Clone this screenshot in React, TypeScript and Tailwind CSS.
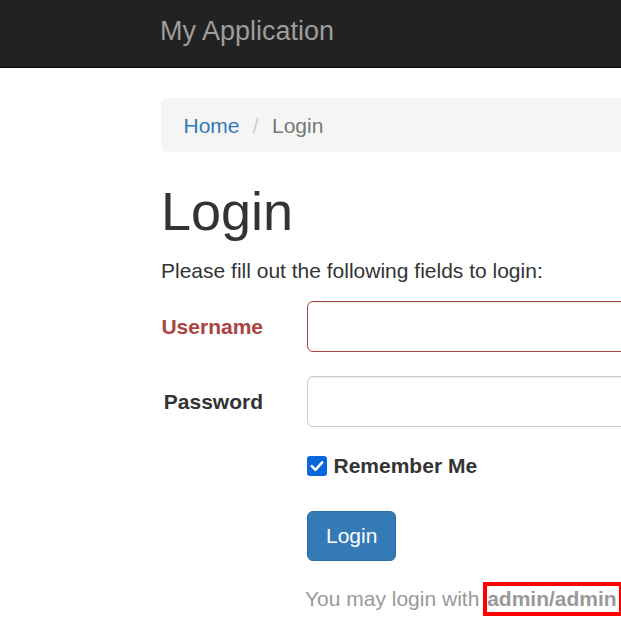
import React from "react";

export default function App() {
  return (
    <div
      className="w-[621px] h-[619px] overflow-hidden bg-white text-[#333]"
      style={{ fontFamily: '"Liberation Sans", Arial, sans-serif' }}
    >
      <nav className="h-[68px] bg-[#222] border-b border-[#080808] pl-[160px]">
        <div className="pt-[18px] text-[27px] leading-[27px] text-[#9d9d9d] whitespace-nowrap">
          My Application
        </div>
      </nav>

      <main className="pl-[161px] pt-[30px]">
        <ul className="w-[1710px] rounded-[6px] bg-[#f5f5f5] pt-[13px] pb-[11px] px-[22.5px] text-[21px] leading-[30px] flex items-center whitespace-nowrap">
          <li className="text-[#337ab7]">Home</li>
          <li className="pl-[5.8px]">
            <span className="px-[7.5px] text-[#ccc]">/{"\u00a0"}</span>
            <span className="text-[#777]">Login</span>
          </li>
        </ul>

        <h1 className="mt-[30px] mb-[15px] text-[54px] leading-[59.4px] font-normal text-[#333]">
          Login
        </h1>

        <p className="mb-[15px] text-[21px] leading-[30px] text-[#333] whitespace-nowrap">
          Please fill out the following fields to login:
        </p>

        <div className="flex">
          <label className="w-[102px] shrink-0 mr-[44px] pt-[10.5px] text-right text-[21px] leading-[30px] font-bold text-[#a94442] whitespace-nowrap">
            Username
          </label>
          <div className="h-[51px] w-[394px] shrink-0 rounded-[6px] border border-[#a94442] bg-white shadow-[inset_0_1px_1px_rgba(0,0,0,0.075)]" />
        </div>

        <div className="flex mt-[24px]">
          <label className="w-[102px] shrink-0 mr-[44px] pt-[10.5px] text-right text-[21px] leading-[30px] font-bold text-[#333] whitespace-nowrap">
            Password
          </label>
          <div className="h-[51px] w-[394px] shrink-0 rounded-[6px] border border-[#ccc] bg-white shadow-[inset_0_1px_1px_rgba(0,0,0,0.075)]" />
        </div>

        <div className="mt-[24px] ml-[146px] h-[30px] flex items-center">
          <span className="w-[20px] h-[20px] shrink-0 rounded-[3px] bg-[#0a66d9] flex items-center justify-center">
            <svg width="20" height="20" viewBox="0 0 20 20" fill="none">
              <path
                d="M4.8 10.2 L8.4 13.8 L15.2 6.4"
                stroke="#fff"
                strokeWidth="2.6"
                strokeLinecap="round"
                strokeLinejoin="round"
              />
            </svg>
          </span>
          <span className="ml-[6.5px] text-[21px] leading-[30px] font-bold text-[#333] whitespace-nowrap">
            Remember Me
          </span>
        </div>

        <div className="mt-[30px] ml-[146px]">
          <button className="h-[50px] px-[18px] rounded-[6px] border border-[#2e6da4] bg-[#337ab7] text-white text-[21px] leading-[30px] flex items-center">
            Login
          </button>
        </div>

        <div className="mt-[22.5px] ml-[144px] text-[21px] leading-[30px] text-[#999] whitespace-nowrap">
          You may login with{" "}
          <strong className="relative inline-block ml-[2px] font-bold">
            admin/admin
            <span className="absolute -left-[4px] -right-[6px] -top-[2px] -bottom-[2px] border-4 border-[#ff0000]" />
          </strong>
        </div>
      </main>
    </div>
  );
}
